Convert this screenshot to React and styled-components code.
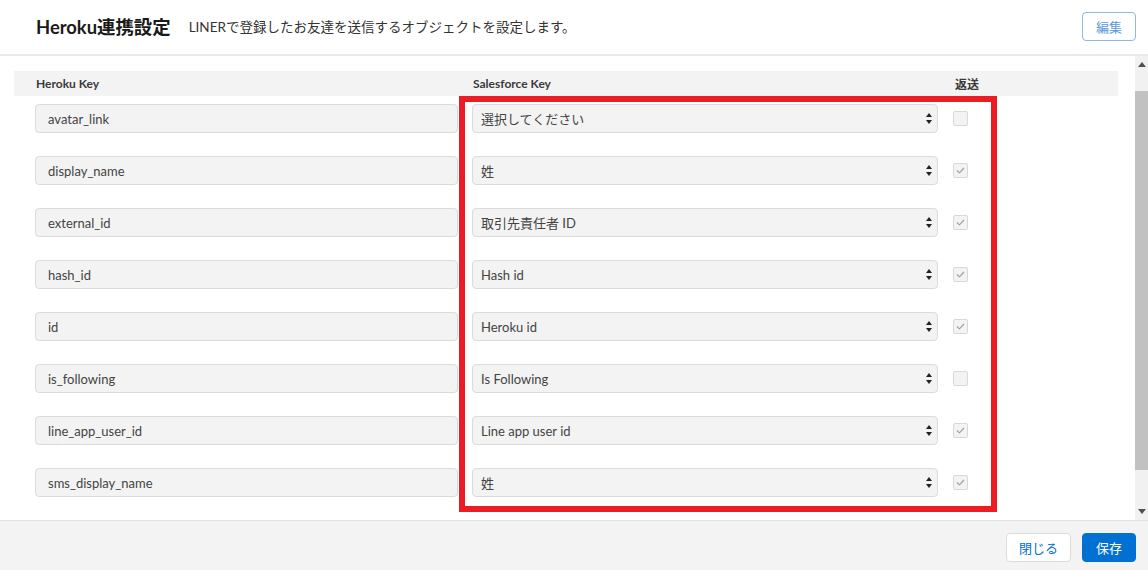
import styled, { createGlobalStyle } from 'styled-components';

const GlobalStyle = createGlobalStyle`
  html, body {
    margin: 0;
    padding: 0;
    background: #fff;
  }
  body {
    font-family: Lato, "Noto Sans CJK JP", sans-serif;
    color: #3e3e3c;
  }
  * {
    box-sizing: border-box;
  }
`;

const ROWS = [
  { key: 'avatar_link', sf: '選択してください', back: false },
  { key: 'display_name', sf: '姓', back: true },
  { key: 'external_id', sf: '取引先責任者 ID', back: true },
  { key: 'hash_id', sf: 'Hash id', back: true },
  { key: 'id', sf: 'Heroku id', back: true },
  { key: 'is_following', sf: 'Is Following', back: false },
  { key: 'line_app_user_id', sf: 'Line app user id', back: true },
  { key: 'sms_display_name', sf: '姓', back: true },
];

const Page = styled.div`
  display: flex;
  flex-direction: column;
  height: 100vh;
  overflow: hidden;
`;

const Header = styled.header`
  height: 56px;
  flex-shrink: 0;
  display: flex;
  align-items: center;
  padding: 0 12px 2px 36px;
  border-bottom: 2px solid #e9e9e9;
`;

const Title = styled.h1`
  margin: 0 18px 0 0;
  font-size: 18.4px;
  font-weight: 700;
  color: #1a1a1a;
`;

const Subtitle = styled.p`
  margin: 0;
  font-size: 13.5px;
  color: #333;
  flex: 1;
`;

const Button = styled.button`
  height: 29px;
  padding: 0 ${(p) => p.$pad || 13}px;
  border-radius: 4px;
  font-family: inherit;
  font-size: 13px;
  cursor: pointer;
  border: 1px solid ${(p) => (p.$primary ? '#0070d2' : p.$light ? '#8ab9e6' : '#dddbda')};
  background: ${(p) => (p.$primary ? '#0070d2' : '#fff')};
  color: ${(p) => (p.$primary ? '#fff' : p.$light ? '#5a9ad6' : '#0070d2')};
`;

const Body = styled.div`
  flex: 1;
  display: flex;
  min-height: 0;
`;

const Content = styled.div`
  flex: 1;
  position: relative;
  padding: 15px 17px 0 14px;
`;

const HeadRow = styled.div`
  display: grid;
  grid-template-columns: 423px 466px 1fr;
  column-gap: 14px;
  align-items: center;
  height: 25px;
  padding-left: 22px;
  background: #f3f3f3;
  font-size: 12px;
  font-weight: 700;
  color: #3a3a3a;
`;

const HeadCell = styled.div`
  padding-left: ${(p) => p.$indent || 0}px;
`;

const Rows = styled.div`
  display: flex;
  flex-direction: column;
  gap: 23px;
  margin-top: 8px;
`;

const Row = styled.div`
  display: grid;
  grid-template-columns: 423px 466px 1fr;
  column-gap: 14px;
  align-items: center;
  padding-left: 21px;
`;

const Field = styled.div`
  position: relative;
  height: 29px;
  display: flex;
  align-items: center;
  padding: 0 12px 0 ${(p) => p.$padLeft || 12}px;
  background: #f3f3f3;
  border: 1px solid #dddbda;
  border-radius: 4px;
  font-size: 13px;
  color: #444;
`;

const Arrows = styled.svg`
  position: absolute;
  right: 5px;
  top: 7px;
`;

const Check = styled.div`
  width: 15px;
  height: 15px;
  margin-left: 1px;
  border: 1px solid #d9d9d9;
  border-radius: 2px;
  background: #f3f3f3;
  display: flex;
  align-items: center;
  justify-content: center;
`;

const Highlight = styled.div`
  position: absolute;
  left: 459px;
  top: 40px;
  width: 538px;
  height: 416px;
  border: 6px solid #ec1c24;
  pointer-events: none;
`;

const Scrollbar = styled.div`
  width: 13px;
  flex-shrink: 0;
  background: #f1f1f1;
  display: flex;
  flex-direction: column;
  align-items: center;
`;

const ScrollArrow = styled.div`
  height: 17px;
  display: flex;
  align-items: center;
  justify-content: center;
`;

const Thumb = styled.div`
  width: 13px;
  margin: 18px 0 33px;
  flex: 1;
  background: #c1c1c1;
`;

const Footer = styled.footer`
  height: 50px;
  flex-shrink: 0;
  display: flex;
  align-items: center;
  justify-content: flex-end;
  gap: 11px;
  padding: 3px 12px 0;
  background: #f3f3f3;
  border-top: 1px solid #e0e0e0;
`;

function SelectArrows() {
  return (
    <Arrows width="6" height="13" viewBox="0 0 6 13">
      <path d="M3 1 L6 5 L0 5 Z" fill="#222" />
      <path d="M0 8 L6 8 L3 12 Z" fill="#222" />
    </Arrows>
  );
}

function Checkbox({ checked }) {
  return (
    <Check>
      {checked && (
        <svg width="9" height="7" viewBox="0 0 9 7">
          <path d="M1 3.5 L3.5 5.8 L8 1" fill="none" stroke="#9a9a9a" strokeWidth="1.1" />
        </svg>
      )}
    </Check>
  );
}

function Triangle({ down }) {
  return (
    <svg width="8" height="5" viewBox="0 0 8 5">
      <path d={down ? 'M0 0 L8 0 L4 5 Z' : 'M4 0 L8 5 L0 5 Z'} fill="#505050" />
    </svg>
  );
}

export default function App() {
  return (
    <>
      <GlobalStyle />
      <Page>
        <Header>
          <Title>Heroku連携設定</Title>
          <Subtitle>LINERで登録したお友達を送信するオブジェクトを設定します。</Subtitle>
          <Button $light $pad={13}>編集</Button>
        </Header>
        <Body>
          <Content>
            <HeadRow>
              <HeadCell>Heroku Key</HeadCell>
              <HeadCell>Salesforce Key</HeadCell>
              <HeadCell $indent={2}>返送</HeadCell>
            </HeadRow>
            <Rows>
              {ROWS.map((r) => (
                <Row key={r.key}>
                  <Field>{r.key}</Field>
                  <Field $padLeft={8}>
                    {r.sf}
                    <SelectArrows />
                  </Field>
                  <Checkbox checked={r.back} />
                </Row>
              ))}
            </Rows>
            <Highlight />
          </Content>
          <Scrollbar>
            <ScrollArrow>
              <Triangle />
            </ScrollArrow>
            <Thumb />
            <ScrollArrow>
              <Triangle down />
            </ScrollArrow>
          </Scrollbar>
        </Body>
        <Footer>
          <Button $pad={12}>閉じる</Button>
          <Button $primary $pad={13}>保存</Button>
        </Footer>
      </Page>
    </>
  );
}
